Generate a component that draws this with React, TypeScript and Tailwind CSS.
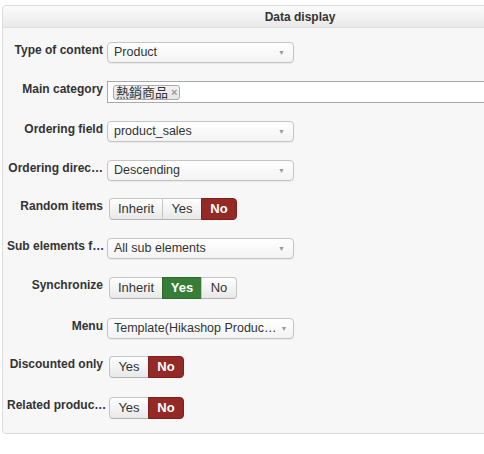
import React from 'react'

type Choice = { label: string; active?: 'red' | 'green' }

type Row =
  | { kind: 'select'; label: string; value: string; h: string }
  | { kind: 'tags'; label: string; tags: string[]; h: string }
  | { kind: 'toggle'; label: string; options: Choice[]; h: string }

// labels and values are already shortened the way the form shows them
const rows: Row[] = [
  { kind: 'select', label: 'Type of content', value: 'Product', h: 'h-[39px]' },
  { kind: 'tags', label: 'Main category', tags: ['熱銷商品'], h: 'h-[40px]' },
  { kind: 'select', label: 'Ordering field', value: 'product_sales', h: 'h-[39px]' },
  { kind: 'select', label: 'Ordering direc…', value: 'Descending', h: 'h-[38px]' },
  {
    kind: 'toggle',
    label: 'Random items',
    options: [{ label: 'Inherit' }, { label: 'Yes' }, { label: 'No', active: 'red' }],
    h: 'h-[40px]',
  },
  { kind: 'select', label: 'Sub elements f…', value: 'All sub elements', h: 'h-[39px]' },
  {
    kind: 'toggle',
    label: 'Synchronize',
    options: [{ label: 'Inherit' }, { label: 'Yes', active: 'green' }, { label: 'No' }],
    h: 'h-[41px]',
  },
  { kind: 'select', label: 'Menu', value: 'Template(Hikashop Produc…', h: 'h-[38px]' },
  {
    kind: 'toggle',
    label: 'Discounted only',
    options: [{ label: 'Yes' }, { label: 'No', active: 'red' }],
    h: 'h-[41px]',
  },
  {
    kind: 'toggle',
    label: 'Related produc…',
    options: [{ label: 'Yes' }, { label: 'No', active: 'red' }],
    h: 'h-[22px]',
  },
]

function Select({ value }: { value: string }) {
  return (
    <div className="flex h-[21px] w-[187px] items-center rounded-[4px] border border-[#c4c4c4] bg-gradient-to-b from-white to-[#f3f3f3] pl-[6px] pr-[8px] text-[12.5px] text-[#333] shadow-[0_1px_1px_rgba(0,0,0,0.06)]">
      <span className="flex-1 whitespace-nowrap leading-[19px]">{value}</span>
      <span className="ml-1 text-[7px] leading-none text-[#999]">▼</span>
    </div>
  )
}

function Tags({ tags }: { tags: string[] }) {
  return (
    <div className="flex h-[22px] w-[420px] items-center gap-1 border border-[#aaa] bg-white px-[5px]">
      {tags.map((t) => (
        <span
          key={t}
          className="flex h-[15px] items-center gap-[3px] rounded-[3px] border border-[#aaa] bg-gradient-to-b from-[#f4f4f4] to-[#e4e4e4] px-[2px] text-[13px] leading-none text-[#333]"
        >
          {t}
          <span className="text-[11px] font-bold text-[#999]">×</span>
        </span>
      ))}
    </div>
  )
}

function Toggle({ options }: { options: Choice[] }) {
  return (
    <div className="ml-[2px] flex h-[22px] text-[13px]">
      {options.map((o, i) => {
        const first = i === 0
        const last = i === options.length - 1
        const round = `${first ? 'rounded-l-[4px]' : ''} ${last ? 'rounded-r-[4px]' : ''}`
        let tone =
          'border border-[#c5c5c5] border-b-[#b3b3b3] bg-gradient-to-b from-white to-[#e8e8e8] text-[#333] font-normal'
        if (o.active === 'red') tone = 'border border-[#7e1f1b] bg-[#942a25] text-white font-bold'
        if (o.active === 'green') tone = 'border border-[#2b6a2b] bg-[#377d37] text-white font-bold'
        const w = o.label === 'Inherit' ? 'w-[54px]' : o.label === 'Yes' ? 'w-[40px]' : 'w-[36px]'
        return (
          <span
            key={o.label}
            className={`flex items-center justify-center ${w} ${tone} ${round} ${first ? '' : '-ml-px'}`}
          >
            {o.label}
          </span>
        )
      })}
    </div>
  )
}

export default function App() {
  return (
    <div className="h-[454px] w-[484px] overflow-hidden bg-white pl-[2px] pt-[5px] font-['Liberation_Sans',Arial,'Noto_Sans_CJK_TC',sans-serif]">
      <div className="w-[596px] rounded-[4px] border border-[#dcdcdc] bg-[#f7f7f7]">
        <div className="flex h-[22px] items-center justify-center rounded-t-[4px] border-b border-[#dedede] bg-gradient-to-b from-[#fbfbfb] to-[#e9e9e9] text-[12px] font-bold text-[#333]">
          Data display
        </div>
        <div className="pb-[14px] pt-[14px]">
          {rows.map((r) => (
            <div key={r.label} className={`flex items-start ${r.h}`}>
              <div className="-mt-[1px] mr-[4px] w-[100px] whitespace-nowrap pl-[4px] text-right text-[12px] font-bold leading-[18px] text-[#333]">
                {r.label}
              </div>
              {r.kind === 'select' && <Select value={r.value} />}
              {r.kind === 'tags' && <Tags tags={r.tags} />}
              {r.kind === 'toggle' && <Toggle options={r.options} />}
            </div>
          ))}
        </div>
      </div>
    </div>
  )
}
